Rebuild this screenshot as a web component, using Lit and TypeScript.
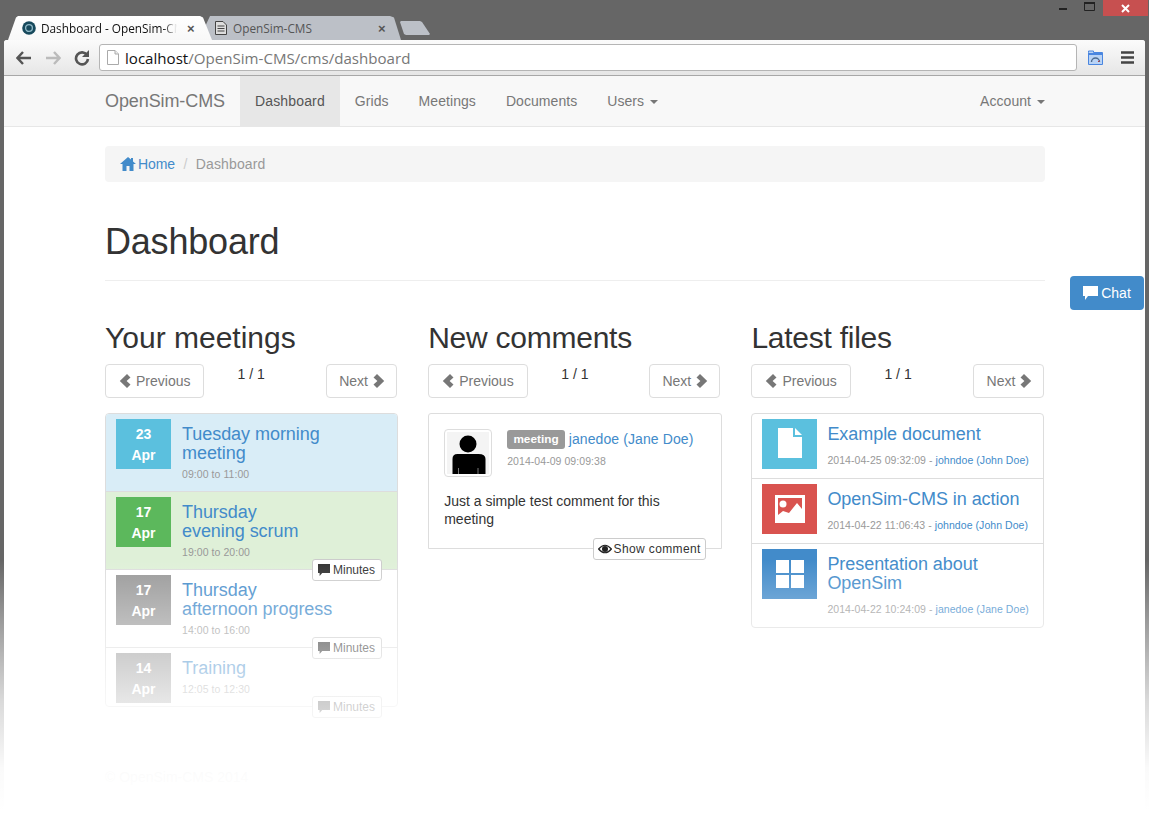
import { LitElement, html, css, svg } from "lit";
import { customElement } from "lit/decorators.js";

const chevL = html`<svg class="chev" viewBox="0 0 13 14"><path d="M8 0 L11.5 3.4 L7.6 7 L11.5 10.6 L8 14 L0.8 7 Z" fill="currentColor"/></svg>`;
const chevR = html`<svg class="chev" viewBox="0 0 13 14"><path d="M5 0 L1.5 3.4 L5.4 7 L1.5 10.6 L5 14 L12.2 7 Z" fill="currentColor"/></svg>`;
const bubble = html`<svg class="bub" viewBox="0 0 12 12"><path d="M0 0 H12 V9 H4.2 L1.6 12 V9 H0 Z" fill="currentColor"/></svg>`;

function pager() {
  return html`<div class="pager">
    <a class="pbtn">${chevL}<span>Previous</span></a>
    <span class="count">1 / 1</span>
    <a class="pbtn next">Next${chevR}</a>
  </div>`;
}

@customElement("app-root")
export class AppRoot extends LitElement {
  static styles = css`
    :host { display: block; width: 1149px; height: 838px; overflow: hidden; position: relative; background: #666; font-family: "Liberation Sans", Arial, sans-serif; color: #333; font-size: 14px; }
    * { box-sizing: border-box; }
    .titlebar { height: 40px; display: flex; align-items: flex-start; position: relative; }
    .tabs { display: flex; align-items: flex-end; height: 40px; padding: 16px 0 0 8px; }
    .tab { height: 24px; display: flex; align-items: center; font-family: "Open Sans", sans-serif; font-size: 11.8px; position: relative; white-space: nowrap; overflow: hidden; }
    .tab.active { width: 204px; background: linear-gradient(#fff, #f8f8f8); color: #111; clip-path: polygon(0 100%, 8px 6%, 10px 0, 192px 0, 195px 6%, 204px 100%); padding-left: 14px; gap: 5px; z-index: 1; }
    .tab.other { width: 197px; margin-left: -8px; background: #bcc0c7; color: #555; clip-path: polygon(0 100%, 1px 45%, 6px 0, 186px 0, 190px 6%, 197px 100%); padding-left: 11px; gap: 6px; }
    .tab .tt { width: 136px; overflow: hidden; -webkit-mask-image: linear-gradient(90deg, #000 90%, transparent); mask-image: linear-gradient(90deg, #000 90%, transparent); }
    .tab.other .tt { width: 134px; -webkit-mask-image: none; mask-image: none; }
    .tab .x { font-size: 13px; font-weight: 700; color: #555; font-family: "Liberation Sans", sans-serif; margin-left: 5px; }
    .newtab { width: 30px; height: 14px; background: #bcc0c7; margin: 0 0 5px -1px; clip-path: polygon(1px 0, 20px 0, 22px 1px, 30px 92%, 29px 100%, 6px 100%, 4px 92%, 0 8%); }
    .winctl { position: absolute; right: 0; top: 0; display: flex; align-items: flex-start; }
    .winbtn { width: 27px; height: 16px; display: flex; justify-content: center; }
    .winclose { width: 45px; height: 16px; background: #c75050; display: flex; justify-content: center; align-items: center; margin: 0 1px 0 0; }
    .shell { position: absolute; left: 4px; right: 4px; top: 40px; bottom: 0; background: #fff; border-radius: 3px 3px 0 0; }
    .toolbar { height: 36px; background: linear-gradient(#fbfbfb, #e6e6e6); border-bottom: 1px solid #a8a8a8; display: flex; align-items: center; padding-left: 5px; border-radius: 3px 3px 0 0; }
    .tb { width: 29px; height: 24px; display: flex; align-items: center; justify-content: center; flex: none; }
    .omni { flex: none; width: 978px; height: 27px; background: #fff; border: 1px solid #b5b5b5; border-radius: 3px; margin-left: 3px; display: flex; align-items: center; padding-left: 7px; font-family: "Open Sans", sans-serif; font-size: 15.1px; color: #777; white-space: nowrap; }
    .omni b { font-weight: 400; color: #111; }
    .omni svg { margin-right: 6px; flex: none; }
    .tools { display: flex; align-items: center; margin-left: 11px; gap: 18px; }
    .nav { height: 51px; background: #f8f8f8; border-bottom: 1px solid #e7e7e7; display: flex; padding: 0 100px 0 101px; color: #777; }
    .brand { font-size: 18px; line-height: 50px; width: 135px; flex: none; letter-spacing: -.1px; }
    .nav a { height: 50px; line-height: 50px; padding: 0 15px; white-space: nowrap; letter-spacing: .06px; }
    .nav a.on { background: #e7e7e7; color: #555; letter-spacing: .15px; }
    .caret { display: inline-block; width: 0; height: 0; border-top: 4px solid currentColor; border-left: 4px solid transparent; border-right: 4px solid transparent; vertical-align: middle; margin-left: 2px; }
    .sp { flex: 1; }
    .nav a.acct { padding-right: 0; }
    .container { padding: 0 100px 0 101px; }
    .crumb { margin-top: 19px; height: 36px; background: #f5f5f5; border-radius: 4px; display: flex; align-items: center; padding-left: 15px; color: #999; }
    .crumb .home { color: #428bca; display: flex; align-items: center; gap: 2px; letter-spacing: -.1px; }
    .crumb .sep { color: #ccc; padding: 0 8.5px; }
    .crumb .cur { letter-spacing: .12px; }
    h1 { font-size: 36px; font-weight: 500; margin: 40px 0 0; line-height: 40px; height: 59px; border-bottom: 1px solid #eee; color: #333; letter-spacing: -.2px; }
    .cols { display: flex; margin-top: 36px; gap: 30.2px; width: 941px; }
    .col { width: 293px; flex: none; }
    h2 { font-size: 30px; font-weight: 500; margin: 0; padding-top: 4px; line-height: 33px; color: #333; height: 47px; white-space: nowrap; }
    h2.tight { letter-spacing: -.25px; }
    .pager { display: flex; align-items: flex-start; height: 34px; width: 292px; }
    .col:last-child .pager { width: 293px; }
    .pbtn { height: 34px; border: 1px solid #ddd; border-radius: 4px; display: flex; align-items: center; padding: 0 13px 0 13px; gap: 4px; color: #777; background: #fff; white-space: nowrap; }
    .pbtn.next { padding: 0 11px 0 12.5px; margin-left: auto; }
    .chev { width: 13px; height: 14px; color: #777; flex: none; }
    .count { line-height: 20px; margin-left: 33px; color: #333; }
    .col + .col .count { margin-left: 33.6px; }
    .list { margin-top: 15px; border: 1px solid #ddd; border-radius: 4px; width: 293px; background: #fff; }
    .item { display: flex; position: relative; border-top: 1px solid #ddd; padding: 5px 10px 0 10px; }
    .item:first-child { border-top: 0; border-radius: 3px 3px 0 0; }
    .date { width: 55px; height: 50px; color: #fff; font-weight: 700; text-align: center; line-height: 21px; padding-top: 5px; flex: none; }
    .info { margin-left: 11px; padding-top: 6px; }
    .title { color: #428bca; font-size: 18px; line-height: 19px; display: block; letter-spacing: -.05px; white-space: nowrap; }
    .sub { font-size: 10.5px; color: #999; line-height: 14px; display: block; white-space: nowrap; letter-spacing: .06px; }
    .m { height: 78px; }
    .m:first-child { height: 77px; }
    .m .sub { margin-top: 4px; }
    .m.info-bg { background: #d9edf7; }
    .m.ok-bg { background: #dff0d8; }
    .d-info { background: #5bc0de; }
    .d-ok { background: #5cb85c; }
    .d-gray { background: #999; }
    .minutes { position: absolute; right: 15px; bottom: -12px; height: 22px; background: #fff; border: 1px solid #ccc; border-radius: 3px; font-size: 12px; display: flex; align-items: center; gap: 3px; padding: 0 6px 0 5px; color: #333; z-index: 1; }
    .minutes .bub { width: 12px; height: 12px; }
    .m.last { height: 59px; }
    .comment { margin-top: 15px; border: 1px solid #ddd; width: 293.6px; height: 136px; position: relative; padding: 15px; border-radius: 3px 3px 0 0; }
    .chead { display: flex; gap: 15px; }
    .avatar { width: 48px; height: 48px; border: 1px solid #ddd; border-radius: 4px; padding: 2px; flex: none; }
    .avatar svg { display: block; width: 42px; height: 42px; background: #f4f4f4; }
    .who { padding-top: 1px; }
    .label { display: inline-block; background: #999; color: #fff; font-weight: 700; font-size: 11.8px; line-height: 13px; padding: 3px 6.2px; border-radius: 3px; vertical-align: 1px; }
    .link { color: #428bca; }
    .who .link { letter-spacing: .1px; }
    .who .sub { margin-top: 5px; }
    .ctext { margin-top: 15px; line-height: 18px; width: 240px; }
    .show { position: absolute; right: 15px; bottom: -12px; height: 22px; background: #fff; border: 1px solid #ccc; border-radius: 3px; font-size: 12px; letter-spacing: .38px; display: flex; align-items: center; gap: 2px; padding: 0 4px; white-space: nowrap; }
    .f { height: 65px; }
    .f:first-child { height: 64px; }
    .f:last-child { height: 84px; }
    .f .info { margin-left: 10px; }
    .f .sub { margin-top: 9px; }
    .ficon { width: 55px; height: 50px; flex: none; display: flex; }
    .foot { position: absolute; left: 101px; top: 729px; color: #777; white-space: nowrap; }
    .chat { position: absolute; left: 1066px; top: 236px; width: 74px; height: 34px; background: #428bca; border-radius: 4px; color: #fff; display: flex; align-items: center; justify-content: center; gap: 3px; }
    .chat svg { width: 15px; height: 14px; }
    .fade { position: absolute; left: 0; right: 0; top: 560px; height: 278px; background: linear-gradient(rgba(255,255,255,0) 0%, rgba(255,255,255,.35) 22%, rgba(255,255,255,.75) 50%, rgba(255,255,255,.97) 75%, #fff 90%); pointer-events: none; z-index: 5; }
  `;

  render() {
    return html`
      <div class="titlebar">
        <div class="tabs">
          <div class="tab active">
            <svg width="14" height="14" viewBox="0 0 14 14"><circle cx="7" cy="7" r="6.8" fill="#17495c"/><circle cx="7" cy="7" r="3.4" fill="#17495c" stroke="#8fb8c6" stroke-width="1.4"/></svg>
            <span class="tt">Dashboard - OpenSim-CMS</span><span class="x">×</span>
          </div>
          <div class="tab other">
            <svg width="12" height="14" viewBox="0 0 12 14"><path d="M.5.5H8L11.5 4V13.5H.5Z" fill="#ddd" stroke="#444"/><path d="M2.5 5H9.5M2.5 7.5H9.5M2.5 10H9.5" stroke="#444"/></svg>
            <span class="tt">OpenSim-CMS</span><span class="x">×</span>
          </div>
          <div class="newtab"></div>
        </div>
        <div class="winctl">
          <div class="winbtn"><svg width="10" height="12" viewBox="0 0 10 12"><rect x="1" y="8" width="8" height="2" fill="#222"/></svg></div>
          <div class="winbtn"><svg width="11" height="10" viewBox="0 0 11 10" style="margin-top:2px"><path d="M.5.5H10.5V8.5H.5Z" fill="none" stroke="#222"/><rect x="0" y="0" width="11" height="2" fill="#222"/></svg></div>
          <div class="winclose"><svg width="9" height="9" viewBox="0 0 9 9"><path d="M1 1 8 8M8 1 1 8" stroke="#fff" stroke-width="2"/></svg></div>
        </div>
      </div>
      <div class="shell">
        <div class="toolbar">
          <div class="tb"><svg width="16" height="14" viewBox="0 0 16 14"><path d="M7 1 1.5 7 7 13M2 7H15" fill="none" stroke="#555" stroke-width="2.4"/></svg></div>
          <div class="tb"><svg width="16" height="14" viewBox="0 0 16 14"><path d="M9 1 14.5 7 9 13M14 7H1" fill="none" stroke="#bbb" stroke-width="2.4"/></svg></div>
          <div class="tb"><svg width="16" height="16" viewBox="0 0 16 16"><path d="M13 5A6 6 0 1 0 14 9" fill="none" stroke="#555" stroke-width="2.6"/><path d="M15 0V7H8Z" fill="#555"/></svg></div>
          <div class="omni">
            <svg width="12" height="15" viewBox="0 0 12 15"><path d="M.5.5H8L11.5 4V14.5H.5Z" fill="#fff" stroke="#aaa"/><path d="M8 .5V4H11.5" fill="#eee" stroke="#aaa"/></svg>
            <span><b>localhost</b>/OpenSim-CMS/cms/dashboard</span>
          </div>
          <div class="tools">
            <svg width="15" height="15" viewBox="0 0 15 15"><path d="M.5 2.5V1H5.5V2.5H14.5V14.5H.5Z" fill="#b9d3f5" stroke="#4a86e0"/><rect x="1" y="3" width="13" height="2" fill="#4a86e0"/><path d="M3.5 12A4 4 0 0 1 11.5 12" fill="none" stroke="#4b6a90" stroke-width="1.4"/><path d="M10 12 11.5 10.5" stroke="#c33"/></svg>
            <svg width="13" height="13" viewBox="0 0 13 13"><path d="M0 1.5H13M0 6.5H13M0 11.5H13" stroke="#444" stroke-width="2.6"/></svg>
          </div>
        </div>
        <div class="nav">
          <div class="brand">OpenSim-CMS</div>
          <a class="on">Dashboard</a><a>Grids</a><a>Meetings</a><a>Documents</a><a>Users <span class="caret"></span></a>
          <div class="sp"></div>
          <a class="acct">Account <span class="caret"></span></a>
        </div>
        <div class="container">
          <div class="crumb">
            <span class="home"><svg width="16" height="14" viewBox="0 0 16 14"><path d="M8 0 0 7H2.5V14H6.5V9H9.5V14H13.5V7H16L13 4.4V1H11V2.6Z" fill="#428bca"/></svg>Home</span>
            <span class="sep">/</span><span class="cur">Dashboard</span>
          </div>
          <h1>Dashboard</h1>
          <div class="cols">
            <div class="col">
              <h2>Your meetings</h2>
              ${pager()}
              <div class="list">
                ${this.meeting("23", "d-info", "info-bg", ["Tuesday morning", "meeting"], "09:00 to 11:00", false)}
                ${this.meeting("17", "d-ok", "ok-bg", ["Thursday", "evening scrum"], "19:00 to 20:00", true)}
                ${this.meeting("17", "d-gray", "", ["Thursday", "afternoon progress"], "14:00 to 16:00", true)}
                ${this.meeting("14", "d-gray", "last", ["Training"], "12:05 to 12:30", true)}
              </div>
            </div>
            <div class="col">
              <h2 class="tight">New comments</h2>
              ${pager()}
              <div class="comment">
                <div class="chead">
                  <div class="avatar"><svg viewBox="0 0 42 42"><circle cx="21" cy="12" r="8.5" fill="#000"/><path d="M5.5 42V27Q5.5 22 10.5 22H31.5Q38.5 22 38.5 27V42Z" fill="#000"/><path d="M11.5 36V42M31 36V42" stroke="#777"/></svg></div>
                  <div class="who">
                    <span class="label">meeting</span> <span class="link">janedoe (Jane Doe)</span>
                    <span class="sub">2014-04-09 09:09:38</span>
                  </div>
                </div>
                <div class="ctext">Just a simple test comment for this meeting</div>
                <div class="show"><svg width="14" height="10" viewBox="0 0 14 10"><path d="M.6 5Q7 -2.5 13.4 5Q7 12.5 .6 5Z" fill="none" stroke="#222" stroke-width="1.2"/><circle cx="7" cy="5" r="3" fill="#222"/></svg>Show comment</div>
              </div>
            </div>
            <div class="col">
              <h2 class="tight">Latest files</h2>
              ${pager()}
              <div class="list">
                ${this.file("#5bc0de", svg`<path d="M16 9H31V18H40V39H16Z" fill="#fff"/><path d="M33 9 40 16H33Z" fill="#fff"/>`, ["Example document"], "2014-04-25 09:32:09", "johndoe (John Doe)")}
                ${this.file("#d9534f", svg`<path d="M13 11H43V39H13Z" fill="#fff"/><path d="M16 14H40V25L35 19 27 29 21 27 16 31Z" fill="#d9534f"/><circle cx="21" cy="20" r="3.5" fill="#fff"/>`, ["OpenSim-CMS in action"], "2014-04-22 11:06:43", "johndoe (John Doe)")}
                ${this.file("#428bca", svg`<path d="M14 11H27V24H14ZM29 11H42V24H29ZM14 26H27V39H14ZM29 26H42V39H29Z" fill="#fff"/>`, ["Presentation about", "OpenSim"], "2014-04-22 10:24:09", "janedoe (Jane Doe)")}
              </div>
            </div>
          </div>
        </div>
        <div class="foot">© OpenSim-CMS 2014</div>
        <div class="chat"><svg viewBox="0 0 15 14"><path d="M0 0H15V10H5L2 14V10H0Z" fill="#fff"/></svg>Chat</div>
      </div>
      <div class="fade"></div>
    `;
  }

  meeting(day: string, dc: string, bg: string, title: string[], sub: string, min: boolean) {
    return html`<div class="item m ${bg}">
      <div class="date ${dc}">${day}<br />Apr</div>
      <div class="info">
        <a class="title">${title.map((t) => html`${t}<br />`)}</a>
        <span class="sub">${sub}</span>
      </div>
      ${min ? html`<div class="minutes">${bubble}Minutes</div>` : ""}
    </div>`;
  }

  file(color: string, icon: unknown, title: string[], ts: string, user: string) {
    return html`<div class="item f">
      <div class="ficon" style="background:${color}"><svg width="55" height="50" viewBox="0 0 55 50">${icon}</svg></div>
      <div class="info">
        <a class="title">${title.map((t) => html`${t}<br />`)}</a>
        <span class="sub">${ts} - <span class="link">${user}</span></span>
      </div>
    </div>`;
  }
}
